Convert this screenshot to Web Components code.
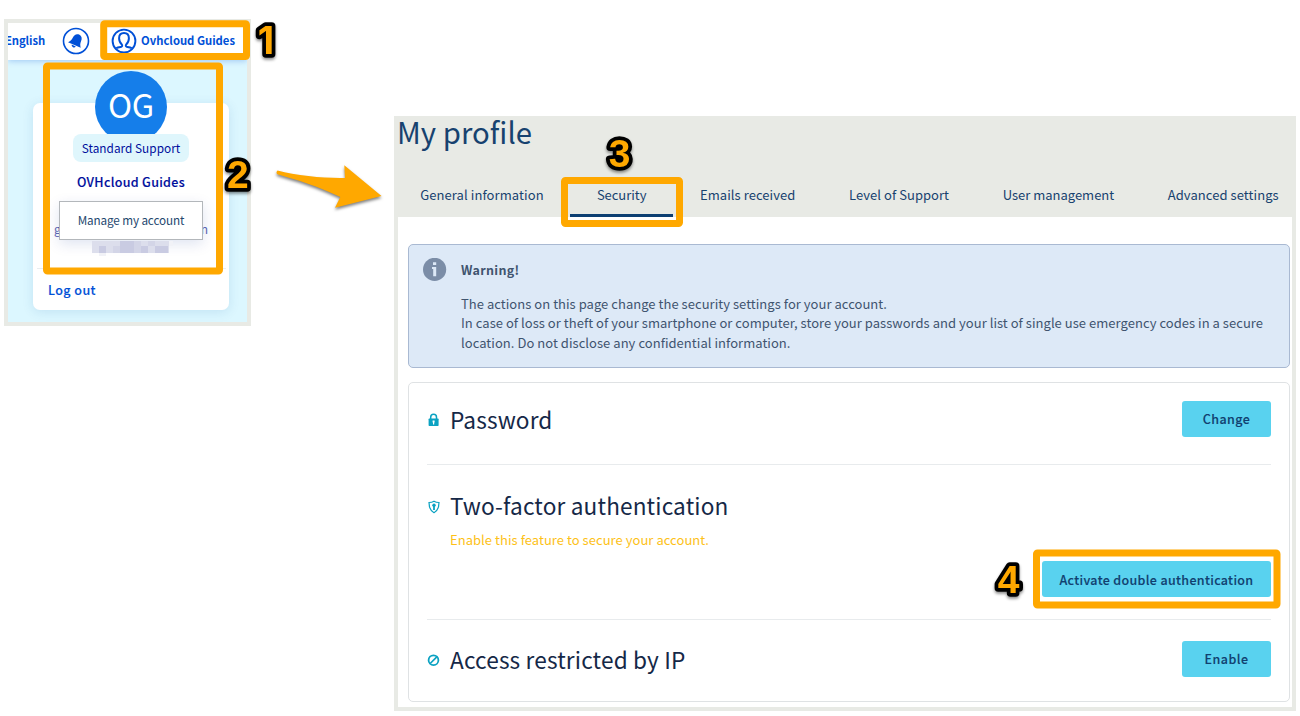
<!DOCTYPE html>
<html lang="en"><head><meta charset="utf-8"><title>Account security guide</title>
<style>
body{margin:0;width:1300px;height:716px;position:relative;overflow:hidden;background:#fff;font-family:"Noto Sans CJK SC","Noto Sans",sans-serif;font-size:13px;line-height:20px;display:flex;align-items:flex-start}
account-panel{margin:19px 0 0 4px}
profile-panel{margin:116px 0 0 143px}
</style></head><body>
<account-panel></account-panel>
<profile-panel></profile-panel>
<guide-marks></guide-marks>
<script>
const define=(name,html,ready)=>{
  const t=document.createElement('template');t.innerHTML=html;
  customElements.define(name,class extends HTMLElement{
    constructor(){super();this.attachShadow({mode:'open'}).append(t.content.cloneNode(true))}
    connectedCallback(){if(ready)ready(this)}
  });
};

// A single line of text tracked to the width in its "w" attribute.
define('fit-text',`<style>:host{display:inline-block;white-space:nowrap;flex:none}span{display:inline-block}</style><span><slot></slot></span>`,el=>{
  const w=+el.getAttribute('w');el.style.width=w+'px';
  requestAnimationFrame(()=>{
    const s=el.shadowRoot.querySelector('span');
    s.style.letterSpacing=((w-s.getBoundingClientRect().width)/el.textContent.length)+'px';
  });
});

define('top-bar',`<style>
:host{display:flex;align-items:center;height:37px;background:#fff;color:#0050d7;font-weight:700;font-size:11.300px;line-height:20px;overflow:hidden;position:relative;box-shadow:0 1px 6px rgba(0,80,215,.28)}
svg{flex:none;margin-top:-2px}.e{margin-left:-3px}.b{margin-left:17px}.a{margin-left:20px;margin-right:3px}fit-text{margin-top:-3px}
</style>
<fit-text class="e" w="40">English</fit-text>
<svg class="b" width="28" height="28" viewBox="0 0 28 28"><circle cx="14" cy="14" r="12.500" fill="#fff" stroke="#0050d7" stroke-width="1.600"/><g transform="rotate(24 14 14)" fill="#0050d7"><path d="M14.200 6.800c-3 .2-4.500 2.300-4.500 5.200 0 3-1.200 4.500-2.500 6.300h13.900c-1.400-1.800-2.400-3.300-2.400-6.300 0-2.900-1.500-5-4.500-5.200Z"/><path d="M11.500 19h4.500a2.300 2.300 0 0 1-4.500 0Z"/></g></svg>
<svg class="a" width="28" height="28" viewBox="0 0 28 28"><circle cx="14" cy="14" r="11.400" fill="none" stroke="#0050d7" stroke-width="1.900"/><path d="M6.200 21.200c1.300-1 3-1.100 5.200-1.400.9-.2 1-1.300.4-2.300-1.900-1.700-2.700-3.500-2.700-6.200 0-3.300 2-5.200 4.900-5.200s4.900 1.900 4.900 5.200c0 2.700-.8 4.500-2.700 6.200-.6 1-.5 2.100.4 2.300 2.200.3 3.900.4 5.200 1.400" fill="none" stroke="#0050d7" stroke-width="2"/></svg>
<fit-text w="94">Ovhcloud Guides</fit-text>`);

define('user-card',`<style>
:host{display:flex;flex-direction:column;align-items:center;width:196px;height:207px;margin:43px 0 0 25px;background:#fff;border-radius:7px;box-shadow:0 2px 12px rgba(0,80,160,.12);color:#000e9c}
.av{flex:none;width:72px;height:72px;border-radius:50%;background:#157eea;margin-top:-32px;color:#fff;font-size:32.500px;line-height:66px;text-align:center}
.bd{flex:none;height:28px;width:116px;margin-top:-9px;border-radius:8px;background:#dff6fc;text-align:center;font-size:11.800px;line-height:27px;z-index:1}
.nm{font-size:12.500px;font-weight:500;-webkit-text-stroke:.12px;margin-top:10px;height:20px}
.id{position:relative;align-self:stretch;height:76px;padding:24px 21px 0;box-sizing:border-box;margin-top:9px}
.em{display:flex;justify-content:space-between;font-size:12px;line-height:20px;margin-top:-6px;color:#5d67b4}
.pop{position:absolute;left:26px;top:0;width:142px;height:37px;border:1px solid #b3b7bb;background:#fff;box-shadow:0 4px 14px rgba(0,50,150,.13);color:#24476e;font-size:11.700px;line-height:36px;text-align:center}
.mo{display:block;margin:1px auto 0;position:relative;left:1px;z-index:1}
hr{width:189px;border:0;border-top:1px solid #e9edf0;margin:-9px 0 0}
.lo{align-self:flex-start;margin:11px 0 0 15px;font-size:12.500px;color:#0050d7;font-weight:500;-webkit-text-stroke:.12px}
</style>
<div class="av"><fit-text w="46">OG</fit-text></div>
<div class="bd"><fit-text w="98.500">Standard Support</fit-text></div>
<fit-text class="nm" w="108">OVHcloud Guides</fit-text>
<div class="id"><div class="em"><span>g</span><span>n</span></div>
<svg class="mo" width="82" height="16" viewBox="0 0 82 16" shape-rendering="crispEdges"><path fill="#dcdeec" d="M1 1h77v12H1z"/><path fill="#c9cbe2" d="M8 6h7v7H8zM29 1h14v12H29zM50 6h7v7h-7zM64 6h13v7H64z"/><path fill="#d3d5e7" d="M22 6h7v7h-7zM43 1h7v12h-7zM57 1h7v5h-7z"/><path fill="#f1f2f7" d="M8 13h7v3H8zM78 1h4v5h-4z"/></svg>
<div class="pop"><fit-text w="106.500">Manage my account</fit-text></div></div>
<hr><fit-text class="lo" w="48">Log out</fit-text>`);

define('account-panel',`<style>:host{display:block;flex:none;box-sizing:border-box;width:247px;height:307px;border:4px solid #e8eae5;background:#dcf7ff;overflow:hidden}user-card{position:relative}</style><top-bar></top-bar><user-card></user-card>`);

define('tab-item',`<style>:host{display:flex;box-sizing:border-box;height:33px;padding:0 26.800px;border-bottom:3px solid transparent;flex:none}:host([active]){border-color:#0d3f72}</style><slot></slot>`);

define('action-button',`<style>:host{display:flex;flex:none;align-items:center;justify-content:center;height:36px;width:89px;border-radius:3px;background:#59d2ef;color:#11406f;font-size:12.500px;font-weight:500;-webkit-text-stroke:.12px;line-height:20px}:host([wide]){width:229px;box-sizing:border-box;padding-top:2px}</style><slot></slot>`);

define('info-alert',`<style>
:host{display:flex;box-sizing:border-box;height:124px;border:1px solid #a9b9d2;border-radius:5px;background:#dde9f7;color:#3f546f;padding:13px 14px}
svg{flex:none;margin-right:14px}
.t{font-size:12.500px;font-weight:700;height:34px;display:flex;align-items:center;margin-top:-5px}
.l{display:block;height:19.500px;line-height:19.500px}.f{margin-top:7px;height:19px}.g{height:20px}
</style>
<svg width="24" height="24" viewBox="0 0 24 24"><circle cx="11.600" cy="11.400" r="11.600" fill="#7b8da7"/><path d="M10 4.300h3.200v2.700H10zM9 9h4.200v9.200h-3V11H9z" fill="#dde9f7"/></svg>
<div><div class="t"><fit-text w="58.500">Warning!</fit-text></div>
<fit-text class="l f" w="426">The actions on this page change the security settings for your account.</fit-text>
<fit-text class="l g" w="802">In case of loss or theft of your smartphone or computer, store your passwords and your list of single use emergency codes in a secure</fit-text>
<fit-text class="l" w="329.500">location. Do not disclose any confidential information.</fit-text></div>`);

define('setting-row',`<style>
:host{display:flex;align-items:flex-start;box-sizing:border-box;color:#152847;border-bottom:1px solid #e8ebed}
:host([last]){border:0}
.i{width:22px;height:36px;display:flex;align-items:center;flex:none;margin-top:var(--icon-shift,1px)}
.m{flex:1;font-size:22.600px;line-height:36px;padding:1px 0 0 1px}
.a{align-self:var(--action-align,flex-start)}
</style><div class="i"><slot name="icon"></slot></div><div class="m"><slot></slot></div><div class="a"><slot name="action"></slot></div>`);

define('profile-panel',`<style>
:host{display:flex;flex-direction:column;flex:none;box-sizing:border-box;width:902px;height:595px;border:4px solid #e8eae5;border-top:0;background:#fff}
header{flex:none;height:101px;background:#e8eae5;color:#17426f;display:flex;flex-direction:column;justify-content:space-between}
h1{margin:0;font-weight:400;font-size:29.300px;line-height:30px;margin-left:-1px}
nav{display:flex;margin-left:-5px;align-items:flex-end}nav tab-item{line-height:22px}
nav tab-item:first-child{padding-left:27.200px;padding-right:26.400px}
main{padding:27px 2px 0 10px}
section{margin-top:14px;box-sizing:border-box;height:320px;border:1px solid #dfe2e4;border-radius:5px;padding:18px 18px 0}
.r1{height:64px}.r2{height:155px;padding-top:22px;--action-align:flex-end;--icon-shift:2px;padding-bottom:22px}.r3{padding-top:21px}
.n{display:block;color:#fdc117;font-size:13px;line-height:20px;margin-top:6px}
svg{display:block}
</style>
<header><h1><fit-text w="135">My profile</fit-text></h1>
<nav><tab-item><fit-text w="123.500">General information</fit-text></tab-item><tab-item active><fit-text w="49.500">Security</fit-text></tab-item><tab-item><fit-text w="95.500">Emails received</fit-text></tab-item><tab-item><fit-text w="100">Level of Support</fit-text></tab-item><tab-item><fit-text w="111.500">User management</fit-text></tab-item><tab-item><fit-text w="111">Advanced settings</fit-text></tab-item></nav></header>
<main><info-alert></info-alert>
<section>
<setting-row class="r1"><svg slot="icon" width="13" height="14" viewBox="0 0 13 14"><path d="M3.700 6V4.200a2.900 2.900 0 0 1 5.800 0V6" fill="none" stroke="#0ba2c2" stroke-width="1.500"/><rect x="1.600" y="5.600" width="10" height="7.400" rx=".7" fill="#0ba2c2"/><path d="M5.600 7.500h2v1.700l-.4.5v1.700H6V9.700l-.4-.5z" fill="#fff"/></svg><fit-text w="102.500">Password</fit-text><action-button slot="action"><fit-text w="47.500">Change</fit-text></action-button></setting-row>
<setting-row class="r2"><svg slot="icon" width="14" height="14" viewBox="0 0 14 14"><path d="M7 1.200c1.600 1 3.200 1.300 5 1.300 0 5-1.300 8.300-5 10.200C3.300 10.800 2 7.500 2 2.500c1.800 0 3.400-.3 5-1.300Z" fill="#fff" stroke="#0ba2c2" stroke-width="1.200"/><circle cx="7" cy="5.300" r="1.700" fill="#0ba2c2"/><path d="M6.100 6h1.800v4H6.100z" fill="#0ba2c2"/></svg><fit-text w="278.500">Two-factor authentication</fit-text><fit-text class="n" w="259">Enable this feature to secure your account.</fit-text><action-button wide slot="action"><fit-text w="194">Activate double authentication</fit-text></action-button></setting-row>
<setting-row class="r3" last><svg slot="icon" width="13" height="13" viewBox="0 0 13 13"><circle cx="6.500" cy="6.200" r="4.900" fill="none" stroke="#0ba2c2" stroke-width="1.800"/><path d="m3.200 9.500 6.600-6.600" stroke="#0ba2c2" stroke-width="1.700"/></svg><fit-text w="235.500">Access restricted by IP</fit-text><action-button slot="action"><fit-text w="44">Enable</fit-text></action-button></setting-row>
</section></main>`);

// Step numbers, highlight frames and the arrow that lie over both panels.
define('guide-marks',`<style>:host{position:absolute;inset:0}svg{display:block}
text{font:700 39px "Liberation Sans",Arial,sans-serif;fill:#ffa800;stroke:#000;stroke-width:7.500px;stroke-linejoin:round;paint-order:stroke;text-anchor:middle;filter:drop-shadow(0 2px 1.500px rgba(0,0,0,.45))}
.one{font-family:Inter,sans-serif;font-size:38px}
rect{fill:none;stroke:#ffa800;stroke-width:7px}</style>
<svg width="1300" height="716" viewBox="0 0 1300 716">
<rect x="103.700" y="23.700" width="142.800" height="32.800" rx="1"/><rect x="46.500" y="66" width="173" height="205" rx="1"/><rect x="564.500" y="180.500" width="115" height="43" rx="1"/><rect x="1036.500" y="553" width="240.500" height="52" rx="1"/>
<path d="M277.500 170.600C297 176 326 178.500 345 178L344.300 165.300 381.500 196 335 207.700 340.300 197C318 186 297 180 277.500 174.200Q275.500 172.500 277.500 170.600Z" fill="#ffa800" style="filter:drop-shadow(0 2px 1.500px rgba(0,0,0,.5))"/>
<text class="one" x="266" y="54">1</text><text x="237.800" y="187.500">2</text><text x="619.700" y="167">3</text><text x="1008.500" y="592.800">4</text></svg>`);
</script></body></html>
